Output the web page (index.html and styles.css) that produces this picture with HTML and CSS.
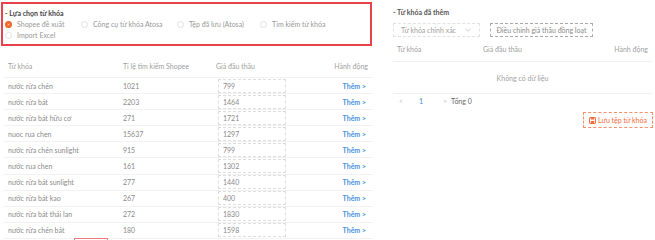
FILE: index.html
```html
<!DOCTYPE html>
<html lang="vi">
<head>
<meta charset="utf-8">
<link rel="stylesheet" href="styles.css">
</head>
<body>
<div class="page">
  <section class="left">
    <div class="picker">
      <div class="title">- Lựa chọn từ khóa</div>
      <div class="radios">
        <label class="radio r1"><span class="dot on"></span>Shopee đề xuất</label>
        <label class="radio r2"><span class="dot"></span>Công cụ từ khóa Atosa</label>
        <label class="radio r3"><span class="dot"></span>Tệp đã lưu (Atosa)</label>
        <label class="radio r4"><span class="dot"></span>Tìm kiếm từ khóa</label>
      </div>
      <div class="radios">
        <label class="radio"><span class="dot"></span>Import Excel</label>
      </div>
    </div>
    <div class="ltable">
      <div class="lrow lhead"><span>Từ khóa</span><span>Tỉ lệ tìm kiếm Shopee</span><span class="bidh">Giá đầu thầu</span><span class="act">Hành động</span></div>
      <div class="lrow"><span>nước rửa chén</span><span>1021</span><span class="inp">799</span><span class="act link">Thêm &gt;</span></div>
      <div class="lrow"><span>nước rửa bát</span><span>2203</span><span class="inp">1464</span><span class="act link">Thêm &gt;</span></div>
      <div class="lrow"><span>nước rửa bát hữu cơ</span><span>271</span><span class="inp">1721</span><span class="act link">Thêm &gt;</span></div>
      <div class="lrow"><span>nuoc rua chen</span><span>15637</span><span class="inp">1297</span><span class="act link">Thêm &gt;</span></div>
      <div class="lrow"><span>nước rửa chén sunlight</span><span>915</span><span class="inp">799</span><span class="act link">Thêm &gt;</span></div>
      <div class="lrow"><span>nước rua chen</span><span>161</span><span class="inp">1302</span><span class="act link">Thêm &gt;</span></div>
      <div class="lrow"><span>nước rửa bát sunlight</span><span>277</span><span class="inp">1440</span><span class="act link">Thêm &gt;</span></div>
      <div class="lrow"><span>nước rửa bát kao</span><span>267</span><span class="inp">400</span><span class="act link">Thêm &gt;</span></div>
      <div class="lrow"><span>nước rửa bát thái lan</span><span>272</span><span class="inp">1830</span><span class="act link">Thêm &gt;</span></div>
      <div class="lrow"><span>nước rửa chén bát</span><span>180</span><span class="inp">1598</span><span class="act link">Thêm &gt;</span></div>
    </div>
    <div class="redbit"></div>
  </section>
  <section class="right">
    <div class="title">- Từ khóa đã thêm</div>
    <div class="controls">
      <div class="select">Từ khóa chính xác
        <svg class="chev" width="6" height="4" viewBox="0 0 6 4"><path d="M0.5 0.8 L3 3.2 L5.5 0.8" fill="none" stroke="#bbb" stroke-width="0.7"/></svg>
      </div>
      <div class="btn">Điều chỉnh giá thầu đồng loạt</div>
    </div>
    <div class="rhead"><span>Từ khóa</span><span>Giá đầu thầu</span><span class="act">Hành động</span></div>
    <div class="empty">Không có dữ liệu</div>
    <div class="pager"><span class="arrow">&lt;</span><span class="num">1</span><span class="arrow">&gt;</span><span class="total">Tổng 0</span></div>
    <div class="savewrap">
      <div class="save">
        <svg width="7" height="7" viewBox="0 0 7 7"><rect x="0.5" y="0.5" width="6" height="6" rx="0.6" fill="none" stroke="#f26b3a" stroke-width="1"/><rect x="1.8" y="0.5" width="3.4" height="2" fill="#f26b3a"/><rect x="1.8" y="4" width="3.4" height="2.5" fill="#f26b3a"/></svg>
        Lưu tệp từ khóa
      </div>
    </div>
  </section>
</div>
</body>
</html>
```

FILE: styles.css
```css
* { box-sizing: border-box; }
html, body { margin: 0; padding: 0; background: #fff; }
body {
  font-family: "Lato", "Noto Sans", sans-serif;
  font-size: 7px;
  color: #888;
  width: 655px;
  height: 240px;
  overflow: hidden;
}
.page { display: flex; }
.left { width: 373px; padding-left: 1px; }
.picker {
  margin-top: 2px;
  width: 371px;
  height: 44px;
  border: 2px solid #e8434d;
  padding: 5px 0 0 2px;
}
.title { color: #444; font-weight: 700; font-size: 7px; line-height: 9px; }
.radios { display: flex; height: 11px; align-items: center; margin-top: 1px; }
.radios + .radios { margin-top: 0; }
.radio { display: flex; align-items: center; color: #999; line-height: 9px; }
.r1 { width: 76px; }
.r2 { width: 96px; }
.r3 { width: 83px; }
.dot {
  width: 7px; height: 7px; border-radius: 50%;
  border: 1px solid #e0e0e0; margin-right: 5px;
  background: #fff;
}
.dot.on { border: 2px solid #f26522; background: #fff; box-shadow: inset 0 0 0 1px #f26522; }

.ltable { margin-top: 9px; width: 369px; margin-left: 3px; }
.lrow {
  display: grid;
  grid-template-columns: 115px 95px 80px 1fr;
  height: 16.1px;
  align-items: center;
  border-bottom: 1px solid #f2f2f2;
  color: #8a8a8a;
}
.lrow > span:first-child { padding-left: 4px; }
.lrow > span:nth-child(2) { padding-left: 4px; }
.lhead { height: 23px; color: #a0a0a0; }
.lhead .bidh { padding-left: 2px; }
.act { text-align: right; padding-right: 5px; }
.link { color: #4a92dc; font-weight: 700; padding-right: 7px; }
.inp {
  margin-left: 4px;
  width: 68px;
  height: 14px;
  border: 1px dashed #dedede;
  padding-left: 4px;
  line-height: 12px;
}
.redbit { margin-top: -1px; margin-left: 73px; width: 34px; height: 10px; border: 1px solid #ee7b7b; }

.right { width: 282px; padding-left: 20px; padding-top: 8px; }
.right .title { color: #555; }
.controls { display: flex; gap: 10px; margin-top: 6px; }
.select {
  width: 87px; height: 14px; border: 1px dashed #e2e2e2;
  display: flex; align-items: center; justify-content: space-between;
  padding: 0 8px 0 7px; color: #a0a0a0;
}
.btn {
  width: 103px; height: 14px; border: 1px dashed #aaa;
  display: flex; align-items: center; justify-content: center; color: #8a8a8a;
}
.rhead {
  display: grid; grid-template-columns: 86px 1fr 60px;
  width: 259px; height: 25px; align-items: center;
  border-bottom: 1px solid #f0f0f0; color: #a0a0a0; padding-left: 4px;
}
.rhead .act { padding-right: 4px; }
.empty {
  width: 259px; height: 32px; border-bottom: 1px solid #f0f0f0;
  display: flex; align-items: center; justify-content: center; color: #a0a0a0;
}
.pager { display: flex; align-items: center; height: 14px; padding-left: 6px; color: #bbb; }
.pager .arrow { width: 0; }
.pager .num { color: #3b8ad8; margin-left: 20px; margin-right: 20px; }
.pager .total { color: #666; margin-left: 8px; }
.savewrap { display: flex; justify-content: flex-end; width: 260px; margin-top: 4px; }
.save {
  width: 70px; height: 16px; border: 1px dashed #f5906a; color: #f26b3a;
  display: flex; align-items: center; justify-content: center; gap: 2px;
}
```
